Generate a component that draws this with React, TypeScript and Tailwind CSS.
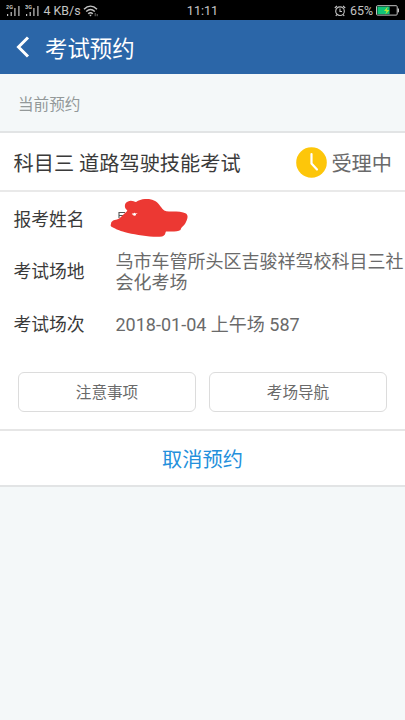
import type { ReactNode } from "react";

function Signal({ label }: { label: string }) {
  return (
    <svg width="16" height="13" viewBox="0 0 16 13" className="shrink-0">
      <text x="0" y="5" fontSize="5.5" fontWeight="700" fill="#c4c4c4" fontFamily="Roboto, sans-serif">
        {label}
      </text>
      <g fill="#c4c4c4">
        <rect x="1" y="10" width="1.2" height="2" />
        <rect x="4.6" y="8" width="1.2" height="4" />
        <rect x="8.3" y="4" width="1.2" height="8" />
        <rect x="12.3" y="2" width="1.2" height="10" />
      </g>
    </svg>
  );
}

function StatusBar() {
  return (
    <div className="grid h-5 grid-cols-[1fr_auto_1fr] items-center bg-black text-[12px] leading-5 text-[#c4c4c4]">
      <div className="flex items-center pl-[5.5px]">
        <Signal label="2G" />
        <div className="w-[3px]" />
        <Signal label="3G" />
        <span className="ml-[3px] whitespace-nowrap text-[12.4px]">4 KB/s</span>
        <svg width="16" height="12" viewBox="0 0 16 12" className="ml-[2px]" fill="none" stroke="#c4c4c4" strokeWidth="1.4">
          <path d="M1 4.2C5 .2 10 .2 14 4.2M3.2 6.6c2.6-2.6 6-2.6 8.6 0M5.2 8.8c1.5-1.4 3.2-1.4 4.6 0" />
          <path d="M6.2 9.8h2.6l-1.3 1.7z" fill="#c4c4c4" stroke="none" />
          <path d="M12.2 8v3.2M14.2 9v2.2" strokeWidth=".8" stroke="#888" />
        </svg>
      </div>
      <div className="pt-px text-[12.6px]">11:11</div>
      <div className="flex items-center justify-end pr-[5px]">
        <svg width="12" height="12" viewBox="0 0 12 12" fill="none" stroke="#c4c4c4" strokeWidth="1.1">
          <circle cx="6" cy="6.2" r="4.3" />
          <path d="M6 3.5v3h2M.8 3 3 1M11.2 3 9 1M2.8 9.6l-1 1.4M9.2 9.6l1 1.4" />
        </svg>
        <span className="ml-1 text-[12.4px]">65%</span>
        <svg width="24" height="11" viewBox="0 0 24 11" className="ml-[3px]">
          <rect x=".5" y=".7" width="20.7" height="9.4" rx="1" fill="none" stroke="#c4c4c4" />
          <rect x="1.4" y="1.6" width="12.2" height="7.6" fill="#10c477" />
          <rect x="21.6" y="3.5" width="1.4" height="3.8" fill="#c4c4c4" />
          <path d="M11.8 1.4 8 6h2.5L9.3 9.4 13.4 5h-2.7z" fill="#b8e834" />
        </svg>
      </div>
    </div>
  );
}

function Row({ label, children }: { label: string; children: ReactNode }) {
  return (
    <div className="flex items-center">
      <div className="w-[102px] shrink-0 text-[17.8px] text-[#3a3a3a]">{label}</div>
      <div className="w-[289px] text-[18px] leading-[21.5px] text-[#6a6a6a]">{children}</div>
    </div>
  );
}

// Red scribble over the applicant's name
function Scribble() {
  return (
    <svg width="80" height="40" viewBox="0 0 80 40" className="absolute -left-[6px] -top-[11px]">
      <path d="M9 19V13.5H15M9 16.5h4" fill="none" stroke="#555" strokeWidth="1.1" />
      <path
        d="M1 25C1 22 4 21 7 20.5C10 19.5 12 17 14.5 14.5C15.5 13.5 18 12 17 11C14 9 14 4 18 2.5C21 .8 24 2.5 26 3C30 .2 35-.5 40 .2C46 1 49 5 51 8C53 11 55 12.5 59 12.6C65 12.5 72 12.5 76 14.5C79 17 77 21 75.5 24C74 27 71 28 70.5 31C68 33 61 32.5 56 32.5C55 34 56 36 52 37.5C42 38.5 28 36 18 34C10 32 7 30.5 4 29C1 28 0 27 1 25Z"
        fill="#ec3833"
      />
      <circle cx="24.5" cy="15.3" r="1.5" fill="#fff" />
      <circle cx="22.5" cy="15" r=".7" fill="#ffd8d6" />
      <circle cx="26.7" cy="14.5" r=".6" fill="#ffd8d6" />
    </svg>
  );
}

export default function App() {
  return (
    <div className="min-h-screen w-full overflow-hidden bg-[#f4f8f9] font-[Roboto,'Noto_Sans_CJK_SC',sans-serif]">
      <StatusBar />
      <header className="flex h-[54px] items-center bg-[#2b66a8] text-white">
        <svg width="14" height="22" viewBox="0 0 14 22" className="ml-4" fill="none" stroke="currentColor" strokeWidth="3">
          <path d="M12 1.5 2.5 11l9.5 9.5" />
        </svg>
        <h1 className="ml-[15px] pt-[5px] text-[22.4px] leading-none">考试预约</h1>
      </header>

      <div className="flex h-[57px] items-center pt-[6px] pl-[18px] text-[15.6px] text-[#939999]">当前预约</div>

      <main className="border-y-2 border-[#e2e4e5] bg-white">
        <div className="flex h-[59px] items-center justify-between border-b-2 border-[#e9e9e9] pt-[3px] pr-[13px] pl-[13.5px]">
          <h2 className="pt-[3px] text-[20.2px] text-[#3a3a3a]">科目三 道路驾驶技能考试</h2>
          <div className="flex items-center text-[20.2px] text-[#6a6a6a]">
            <svg width="31" height="31" viewBox="0 0 31 31" className="mr-1">
              <circle cx="15.5" cy="15.5" r="15.3" fill="#fdc60a" />
              <path d="M15.5 7v9.5l5.5 6" fill="none" stroke="#fff" strokeWidth="2.2" strokeLinecap="round" />
            </svg>
            <span className="pt-[3px]">受理中</span>
          </div>
        </div>

        <div className="flex h-[180px] flex-col pt-[15px] pl-[13.5px]">
          <Row label="报考姓名">
            <div className="relative h-[21px]">
              <Scribble />
            </div>
          </Row>
          <div className="h-[17px]" />
          <Row label="考试场地">乌市车管所头区吉骏祥驾校科目三社会化考场</Row>
          <div className="h-[18px]" />
          <Row label="考试场次">2018-01-04 上午场 587</Row>
        </div>

        <div className="flex h-[57px] gap-[13px] px-[18px] text-[15.6px] text-[#6a6a6a]">
          <button className="h-[40px] flex-1 rounded-md border border-[#dcdcdc] pt-[4px]">注意事项</button>
          <button className="h-[40px] flex-1 rounded-md border border-[#dcdcdc] pt-[4px]">考场导航</button>
        </div>

        <button className="flex h-[56px] w-full items-center justify-center border-t-2 border-[#e6e6e6] pt-[4px] text-[20.2px] text-[#2490dc]">
          取消预约
        </button>
      </main>
    </div>
  );
}
